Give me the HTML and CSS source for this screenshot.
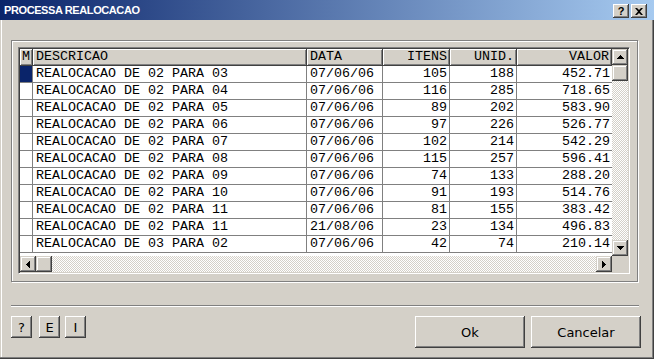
FILE: index.html
```html
<!DOCTYPE html>
<html lang="pt">

<head>
  <meta charset="UTF-8">
  <title>PROCESSA REALOCACAO</title>
  <link rel="stylesheet" href="styles.css">
</head>

<body>
  <div class="window">
    <div class="titlebar">
      <span class="title">PROCESSA REALOCACAO</span>
      <div class="caption-buttons">
        <button class="cap-btn">?</button>
        <button class="cap-btn">
          <svg width="8" height="7" viewBox="0 0 8 7"><path d="M0 0h2l2 2 2-2h2L5 3.5 8 7H6L4 5 2 7H0l3-3.5z" /></svg>
        </button>
      </div>
    </div>

    <div class="client">
      <div class="group">
        <div class="grid">
          <div class="table">
            <div class="row head">
              <span class="mark-col">M</span>
              <span>DESCRICAO</span>
              <span>DATA</span>
              <span class="num">ITENS</span>
              <span class="num">UNID.</span>
              <span class="num">VALOR</span>
            </div>
            <div class="row">
              <span class="mark-col"><i class="mark"></i></span>
              <span>REALOCACAO DE 02 PARA 03</span><span>07/06/06</span>
              <span class="num">105</span><span class="num">188</span><span class="num">452.71</span>
            </div>
            <div class="row">
              <span class="mark-col"></span>
              <span>REALOCACAO DE 02 PARA 04</span><span>07/06/06</span>
              <span class="num">116</span><span class="num">285</span><span class="num">718.65</span>
            </div>
            <div class="row">
              <span class="mark-col"></span>
              <span>REALOCACAO DE 02 PARA 05</span><span>07/06/06</span>
              <span class="num">89</span><span class="num">202</span><span class="num">583.90</span>
            </div>
            <div class="row">
              <span class="mark-col"></span>
              <span>REALOCACAO DE 02 PARA 06</span><span>07/06/06</span>
              <span class="num">97</span><span class="num">226</span><span class="num">526.77</span>
            </div>
            <div class="row">
              <span class="mark-col"></span>
              <span>REALOCACAO DE 02 PARA 07</span><span>07/06/06</span>
              <span class="num">102</span><span class="num">214</span><span class="num">542.29</span>
            </div>
            <div class="row">
              <span class="mark-col"></span>
              <span>REALOCACAO DE 02 PARA 08</span><span>07/06/06</span>
              <span class="num">115</span><span class="num">257</span><span class="num">596.41</span>
            </div>
            <div class="row">
              <span class="mark-col"></span>
              <span>REALOCACAO DE 02 PARA 09</span><span>07/06/06</span>
              <span class="num">74</span><span class="num">133</span><span class="num">288.20</span>
            </div>
            <div class="row">
              <span class="mark-col"></span>
              <span>REALOCACAO DE 02 PARA 10</span><span>07/06/06</span>
              <span class="num">91</span><span class="num">193</span><span class="num">514.76</span>
            </div>
            <div class="row">
              <span class="mark-col"></span>
              <span>REALOCACAO DE 02 PARA 11</span><span>07/06/06</span>
              <span class="num">81</span><span class="num">155</span><span class="num">383.42</span>
            </div>
            <div class="row">
              <span class="mark-col"></span>
              <span>REALOCACAO DE 02 PARA 11</span><span>21/08/06</span>
              <span class="num">23</span><span class="num">134</span><span class="num">496.83</span>
            </div>
            <div class="row">
              <span class="mark-col"></span>
              <span>REALOCACAO DE 03 PARA 02</span><span>07/06/06</span>
              <span class="num">42</span><span class="num">74</span><span class="num">210.14</span>
            </div>
          </div>

          <div class="vscroll">
            <div class="sb-btn">
              <svg width="7" height="4" viewBox="0 0 7 4"><path d="M3 0h1v1h1v1h1v1h1v1H0V3h1V2h1V1h1z" /></svg>
            </div>
            <div class="sb-btn"></div>
            <div class="track"></div>
            <div class="sb-btn">
              <svg width="7" height="4" viewBox="0 0 7 4"><path d="M0 0h7v1h-1v1h-1v1h-1v1h-1v-1h-1v-1h-1v-1h-1z" /></svg>
            </div>
          </div>

          <div class="hscroll">
            <div class="sb-btn">
              <svg width="4" height="7" viewBox="0 0 4 7"><path d="M3 0h1v7h-1v-1h-1v-1h-1v-1h-1v-1h1v-1h1v-1h1z" /></svg>
            </div>
            <div class="sb-btn"></div>
            <div class="track"></div>
            <div class="sb-btn">
              <svg width="4" height="7" viewBox="0 0 4 7"><path d="M0 0h1v1h1v1h1v1h1v1h-1v1h-1v1h-1v1h-1z" /></svg>
            </div>
          </div>

          <div class="corner"></div>
        </div>
      </div>

      <div class="separator"></div>

      <div class="actions">
        <div class="tools">
          <button class="btn small">?</button>
          <button class="btn small e">E</button>
          <button class="btn small i">I</button>
        </div>
        <div class="confirm">
          <button class="btn big">Ok</button>
          <button class="btn big">Cancelar</button>
        </div>
      </div>
    </div>
  </div>
</body>

</html>
```

FILE: styles.css
```css
body {
  margin: 0;
  padding: 0;
  background: #d4d0c8;
  font-family: "DejaVu Sans", sans-serif;
}

.window {
  width: 654px;
  height: 359px;
  display: flex;
  flex-direction: column;
}

/* title bar */
.titlebar {
  flex: none;
  height: 20px;
  display: flex;
  justify-content: space-between;
  align-items: flex-start;
  background: linear-gradient(to right, #0a246a, #a6caf0);
}

.title {
  color: #fff;
  font: bold 11px "Liberation Sans", sans-serif;
  letter-spacing: -0.4px;
  line-height: 21px;
  padding-left: 4px;
}

.caption-buttons {
  display: flex;
  gap: 2px;
  padding: 4px 7px 0 0;
}

.cap-btn {
  width: 16px;
  height: 14px;
  padding: 0;
  border: 0;
  background: #d4d0c8;
  color: #000;
  font: bold 11px "Liberation Sans", sans-serif;
  display: flex;
  align-items: center;
  justify-content: center;
  box-shadow: inset -1px -1px #404040, inset 1px 1px #fff, inset -2px -2px #808080;
}

/* client area */
.client {
  flex: 1;
  padding: 20px 0 0 11px;
  box-shadow: inset -1px -1px #404040, inset -2px -2px #808080, inset 1px 0 #d4d0c8, inset 2px 0 #fff;
}

.group {
  width: 627px;
  height: 242px;
  box-sizing: border-box;
  border: 1px solid #808080;
  box-shadow: inset 1px 1px #fff, 1px 1px #fff;
  padding: 6px 7px 7px 6px;
}

.grid {
  width: 612px;
  height: 227px;
  box-sizing: border-box;
  padding: 1px;
  border: 1px solid;
  border-color: #808080 #fff #fff #808080;
  box-shadow: inset 1px 1px #404040, inset -1px -1px #d4d0c8;
  display: grid;
  grid-template-columns: 592px 16px;
  grid-template-rows: 207px 16px;
}

.table {
  background: #fff;
  overflow: hidden;
  font-family: "Liberation Mono", monospace;
  font-size: 13.33px;
  color: #000;
}

.row {
  display: grid;
  grid-template-columns: 13px 274px 76px 67px 67px 95px;
  height: 17px;
}

.row span {
  box-sizing: border-box;
  border-right: 1px solid #808080;
  border-bottom: 1px solid #808080;
  line-height: 16px;
  padding: 0 3px;
  white-space: nowrap;
  overflow: hidden;
}

.row span:last-child {
  border-right: 0;
}

.row .num {
  text-align: right;
  padding-right: 2px;
}

.row .mark-col {
  padding: 0;
  text-align: center;
  display: flex;
  justify-content: center;
}

.mark {
  display: block;
  width: 100%;
  height: 100%;
  background: #0a246a;
}

.head span {
  background: #d4d0c8;
  border-color: #404040;
  box-shadow: inset 1px 1px #fff, inset -1px -1px #808080;
}

.head span:last-child {
  border-right: 1px solid #404040;
}

/* scroll bars */
.vscroll,
.hscroll {
  display: flex;
  background: repeating-conic-gradient(#fff 0 25%, #d4d0c8 0 50%) 0 0 / 2px 2px;
}

.vscroll {
  flex-direction: column;
}

.track {
  flex: 1;
}

.sb-btn {
  flex: none;
  width: 16px;
  height: 16px;
  box-sizing: border-box;
  background: #d4d0c8;
  display: flex;
  align-items: center;
  justify-content: center;
  box-shadow: inset -1px -1px #404040, inset 1px 1px #d4d0c8, inset -2px -2px #808080, inset 2px 2px #fff;
}

.corner {
  background: #d4d0c8;
}

.separator {
  width: 628px;
  height: 0;
  margin-top: 23px;
  border-top: 1px solid #808080;
  border-bottom: 1px solid #fff;
}

/* buttons */
.actions {
  width: 630px;
  margin-top: 9px;
  display: flex;
  justify-content: space-between;
  align-items: flex-start;
}

.tools,
.confirm {
  display: flex;
}

.confirm {
  gap: 6px;
}

.btn {
  padding: 0;
  border: 0;
  background: #d4d0c8;
  color: #000;
  font-family: "DejaVu Sans", sans-serif;
  font-size: 13px;
  box-shadow: inset -1px -1px #404040, inset 1px 1px #fff, inset -2px -2px #808080, inset 2px 2px #d4d0c8;
}

.btn.small {
  width: 21px;
  height: 22px;
}

.btn.e {
  margin-left: 7px;
}

.btn.i {
  margin-left: 5px;
}

.btn.big {
  width: 110px;
  height: 32px;
}
```
